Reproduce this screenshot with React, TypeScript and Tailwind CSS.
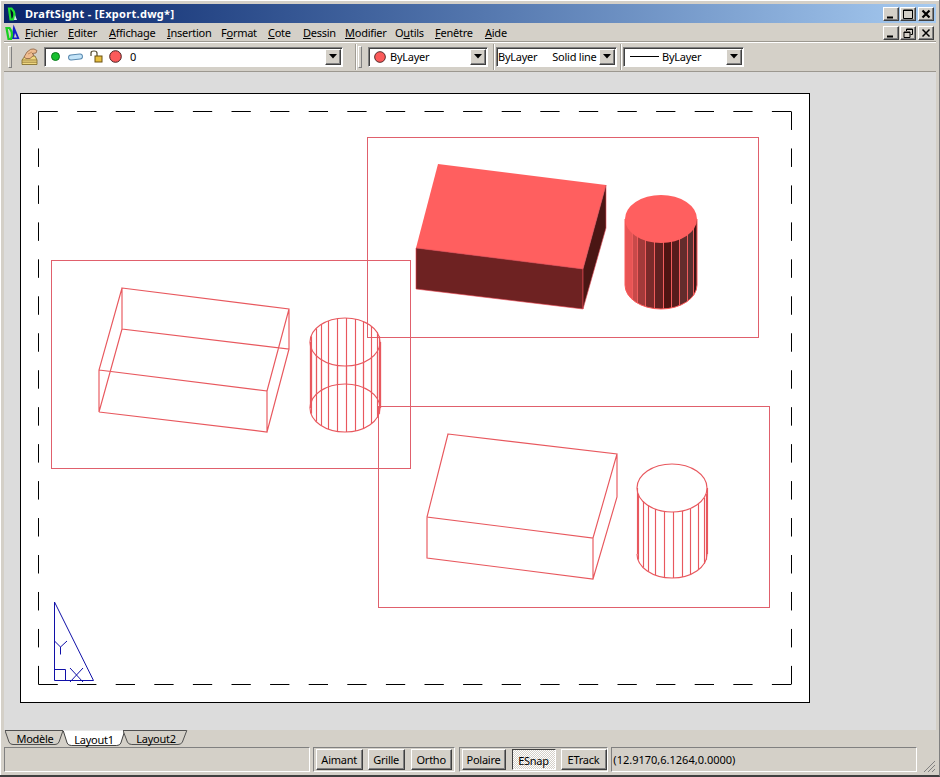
const stroke = "#e8585e";
const raised =
  "border border-t-white border-l-white border-r-[#404040] border-b-[#404040] shadow-[inset_-1px_-1px_0_#808080] bg-[#d4d0c8]";
const sunken =
  "border border-t-[#808080] border-l-[#808080] border-r-white border-b-white shadow-[inset_1px_1px_0_#404040]";
const etched = "border border-t-[#808080] border-l-[#808080] border-r-white border-b-white";

const menu = [
  { pre: "", key: "F", post: "ichier", cls: "w-[43px]" },
  { pre: "", key: "E", post: "diter", cls: "w-[41px]" },
  { pre: "", key: "A", post: "ffichage", cls: "w-[58px]" },
  { pre: "", key: "I", post: "nsertion", cls: "w-[54px]" },
  { pre: "F", key: "o", post: "rmat", cls: "w-[47px]" },
  { pre: "", key: "C", post: "ote", cls: "w-[35px]" },
  { pre: "", key: "D", post: "essin", cls: "w-[42px]" },
  { pre: "", key: "M", post: "odifier", cls: "w-[50px]" },
  { pre: "O", key: "u", post: "tils", cls: "w-[40px]" },
  { pre: "", key: "F", post: "enêtre", cls: "w-[50px]" },
  { pre: "", key: "A", post: "ide", cls: "w-[30px]" },
];

const facets = [-35, -34, -29, -24, -17, -8, 1, 10, 18, 26, 32, 34, 35];

function arc(dx: number, rx: number, ry: number) {
  return ry * Math.sqrt(Math.max(0, 1 - (dx * dx) / (rx * rx)));
}

function Logo({ big }: { big?: boolean }) {
  if (big) {
    return (
      <svg width="15" height="16" viewBox="0 0 15 16" className="shrink-0">
        <path d="M8.5 0.5 L14.5 15 L6.5 15 Z" fill="#1420c8" />
        <path d="M10 9 L12 13.5 L9 13.5 Z" fill="#d4d0c8" />
        <path d="M1.5 4 L4.5 4 Q8.5 9 6 15 L3.5 15 Z" fill="none" stroke="#18d020" strokeWidth="2.2" />
      </svg>
    );
  }
  return (
    <svg width="12" height="14" viewBox="0 0 12 14" className="shrink-0">
      <path d="M3 1.5 L5.5 1.5 Q10.5 6.5 7 12.5 L4.5 12.5 Z" fill="#04102a" stroke="#20e030" strokeWidth="2.2" />
      <path d="M9 8 L11 13 L8 13 Z" fill="#d8e8f0" />
    </svg>
  );
}

function WinButton({ kind, bold }: { kind: "min" | "max" | "restore" | "close"; bold?: boolean }) {
  return (
    <div className={`flex h-[14px] w-[16px] items-center justify-center ${raised}`}>
      <svg width="12" height="10" viewBox="0 0 12 10" fill="none" stroke="#000">
        {kind === "min" && <path d="M2 8.5 H8" strokeWidth="2" />}
        {kind === "max" && <path d="M1.5 1 H10.5 V9.5 H1.5 Z M1.5 1.5 H10.5" />}
        {kind === "restore" && (
          <path d="M4.5 3 V1 H10.5 V6.5 H8.5 M2 4 H8 V9.5 H2 Z M2 4.5 H8 M4.5 1.5 H10.5" />
        )}
        {kind === "close" && (
          <path d="M2.5 1.5 L9.5 8.5 M9.5 1.5 L2.5 8.5" strokeWidth={bold ? 2.2 : 1.5} />
        )}
      </svg>
    </div>
  );
}

function Grip() {
  return (
    <div className="h-[22px] w-[4px] shrink-0 border border-t-white border-l-white border-r-[#808080] border-b-[#808080]" />
  );
}

function Sep() {
  return <div className="h-[26px] w-[2px] shrink-0 border-l border-l-[#a09c94] border-r border-r-white" />;
}

function ComboArrow() {
  return (
    <div className={`flex h-[16px] w-[16px] shrink-0 items-center justify-center ${raised}`}>
      <svg width="8" height="5" viewBox="0 0 8 5">
        <path d="M0 0 H8 L4 4.5 Z" fill="#000" />
      </svg>
    </div>
  );
}

function Dot({ size = 13 }: { size?: number }) {
  return (
    <svg width={size} height={size} viewBox="0 0 13 13" className="shrink-0">
      <circle cx="6.5" cy="6.5" r="5.8" fill="#fb5a5a" stroke="#4a2020" strokeWidth="1" />
    </svg>
  );
}

function LayerIcon() {
  return (
    <svg width="17" height="19" viewBox="0 0 17 19" className="shrink-0">
      <path d="M1 13 L4 9 L14 9 L16 13 L16 17.5 L1 17.5 Z" fill="#f0d880" stroke="#7a6420" strokeWidth="0.8" />
      <path d="M1 13 H16 M1 15.2 H16" stroke="#8a7030" strokeWidth="0.8" />
      <path d="M3 10 L6 5 Q10 1 13 2 L16 3.5 L15 6 L11 6.5 L13 8 L9 11.5 L5 11.5 Z" fill="#eebc90" stroke="#8a6040" strokeWidth="0.8" />
      <path d="M7 7 L11 5" stroke="#b88050" strokeWidth="0.8" />
    </svg>
  );
}

function LockIcon() {
  return (
    <svg width="14" height="13" viewBox="0 0 14 13" className="shrink-0">
      <path d="M2 6 V3 Q2 1 5 1 Q8 1 8 3 V6" fill="none" stroke="#504830" strokeWidth="1.2" />
      <rect x="6" y="6" width="7" height="6" fill="#e8c040" stroke="#6a5010" />
    </svg>
  );
}

function Tab({ label, active, cls }: { label: string; active?: boolean; cls: string }) {
  return (
    <div className={`relative flex items-center justify-center ${cls}`}>
      <svg className="absolute inset-0 h-full w-full" viewBox="0 0 60 17" preserveAspectRatio="none">
        <path
          d={active ? "M0 0 L4 13 Q5 15.5 8 15.5 L52 15.5 Q55 15.5 56 13 L60 0 Z" : "M0 0.5 L4 12 Q5 14.5 8 14.5 L50 14.5 Q53 14.5 54 12 L58 0.5 Z"}
          fill={active ? "#ffffff" : "#d4d0c8"}
          stroke={active ? "#404040" : "#505050"}
          strokeWidth="1"
          vectorEffect="non-scaling-stroke"
        />
        {active && <path d="M0 0 H60" stroke="#ffffff" strokeWidth="1.5" vectorEffect="non-scaling-stroke" />}
      </svg>
      <span className={`relative ${active ? "pt-[1px]" : "-mt-[1px]"}`}>{label}</span>
    </div>
  );
}

function StatusButton({ label, cls, on }: { label: string; cls: string; on?: boolean }) {
  return (
    <div
      className={`flex h-[21px] items-center justify-center ${cls} ${
        on
          ? "border border-t-[#404040] border-l-[#404040] border-r-white border-b-white bg-[repeating-conic-gradient(#ffffff_0_25%,#d4d0c8_0_50%)] bg-[length:2px_2px] pt-[1px]"
          : raised
      }`}
    >
      {label}
    </div>
  );
}

function WireCylinder({ cx, top, bottom, back }: { cx: number; top: number; bottom: number; back?: boolean }) {
  const rx = 35;
  const ry = 24;
  return (
    <g fill="none" stroke={stroke} strokeWidth="1.15">
      <ellipse cx={cx} cy={top} rx={rx} ry={ry} />
      {back && <ellipse cx={cx} cy={bottom} rx={rx} ry={ry} />}
      {!back && <path d={`M${cx - rx} ${bottom} A${rx} ${ry} 0 0 0 ${cx + rx} ${bottom}`} />}
      {facets.map((dx) => {
        const d = arc(dx, rx, ry);
        return <line key={dx} x1={cx + dx + 0.5} x2={cx + dx + 0.5} y1={top + d} y2={bottom + d} />;
      })}
      {back &&
        facets.map((dx) => {
          const d = arc(dx, rx, ry);
          return <line key={`b${dx}`} x1={cx + dx + 0.5} x2={cx + dx + 0.5} y1={top - d} y2={bottom - d} />;
        })}
    </g>
  );
}

function SolidCylinder() {
  const cx = 661;
  const bands = [
    { x: 625, w: 7, c: "#e85555" },
    { x: 632, w: 5, c: "#c84a4a" },
    { x: 637, w: 8, c: "#a23a3a" },
    { x: 645, w: 9, c: "#7a2a2a" },
    { x: 654, w: 9, c: "#602020" },
    { x: 663, w: 8, c: "#4e1412" },
    { x: 671, w: 8, c: "#571c1c" },
    { x: 679, w: 8, c: "#632c2c" },
    { x: 687, w: 6, c: "#5a3030" },
    { x: 693, w: 4, c: "#3a1515" },
  ];
  const lines = [632, 637, 645, 654, 663, 671, 679, 687, 693];
  return (
    <g>
      <clipPath id="solidBody">
        <path d="M625 219 H697 V285 A36 24 0 0 1 625 285 Z" />
      </clipPath>
      <g clipPath="url(#solidBody)">
        {bands.map((b) => (
          <rect key={b.x} x={b.x} y={215} width={b.w} height={96} fill={b.c} />
        ))}
        {lines.map((x) => (
          <line key={x} x1={x + 0.5} x2={x + 0.5} y1={215} y2={311} stroke="#f05c5c" />
        ))}
      </g>
      <path d="M625 219 V285 A36 24 0 0 0 697 285 V219" fill="none" stroke="#fb5a5a" />
      <ellipse cx={cx} cy={219} rx={36} ry={24} fill="#ff5f5f" />
    </g>
  );
}

function Drawing() {
  return (
    <svg width="788" height="608" viewBox="21 94 788 608" className="block">
      {/* sheet margin */}
      <g stroke="#000" fill="none">
        <path d="M38.5 111.5 H791.5" strokeDasharray="19.3 19.3" />
        <path d="M38.5 684.5 H791.5" strokeDasharray="19.3 19.3" />
        <path d="M38.5 111.5 V684.5" strokeDasharray="18.48 18.48" />
        <path d="M791.5 111.5 V684.5" strokeDasharray="18.48 18.48" />
      </g>

      {/* viewports */}
      <g fill="none" stroke="#e0606c" shapeRendering="crispEdges">
        <rect x="367.5" y="137.5" width="391" height="200" />
        <rect x="51.5" y="260.5" width="359" height="208" />
        <rect x="378.5" y="406.5" width="391" height="201" />
      </g>

      {/* shaded box */}
      <path d="M438 164 L606 185 L583 269 L416 248 Z" fill="#ff5f5f" />
      <path d="M416 248 L583 269 L583 309 L416 289 Z" fill="#6e2222" stroke="#e8404c" strokeWidth="0.6" />
      <path d="M606 185 L583 269 L583 309 L606 228 Z" fill="#4a1614" stroke="#e8505c" strokeWidth="0.6" />
      <SolidCylinder />

      {/* wireframe views */}
      <path
        d="M122 288 L289 309 L289 349 L122 329 Z M122 288 L99 370 L99 412 L122 329 M99 370 L267 391 L267 432 L99 412 M289 309 L267 391 M289 349 L267 432"
        fill="none"
        stroke={stroke}
        strokeWidth="1.15"
      />
      <WireCylinder cx={345} top={342} bottom={408} back />
      <path
        d="M448 434 L617 454 L593 538 L427 517 Z M617 454 L617 497 L593 579 L427 558 L427 517 M593 538 L593 579"
        fill="none"
        stroke={stroke}
        strokeWidth="1.15"
      />
      <WireCylinder cx={672} top={488} bottom={554} />

      {/* ucs icon */}
      <g fill="none" stroke="#1010a8">
        <path d="M54.5 602 V680.5 H93.5 Z" />
        <path d="M54.5 669.5 H65.5 V680.5" />
        <path d="M54.5 641 L60.5 647 L67 641 M60.5 647 V654.5" />
        <path d="M70 668 L83 682 M83 668 L70 682" />
      </g>
    </svg>
  );
}

export default function App() {
  return (
    <div className="h-[777px] w-[940px] overflow-hidden bg-[#d4d0c8] font-['Noto_Sans',sans-serif] text-[11px] leading-none tracking-[-0.25px] text-black">
      <div className="flex h-full flex-col border-b-2 border-r border-b-[#404040] border-r-[#808080] pl-[4px] pr-[3px] pt-[4px] shadow-[inset_1px_1px_0_#ffffff]">
        {/* Title bar */}
        <div className="flex h-[19px] shrink-0 items-center bg-gradient-to-r from-[#0a246a] to-[#a6caf0] pl-[2px] pr-[2px]">
          <Logo />
          <span className="ml-[7px] font-bold tracking-[0.3px] text-white">DraftSight - [Export.dwg*]</span>
          <div className="ml-auto flex gap-[1px]">
            <WinButton kind="min" />
            <WinButton kind="max" />
            <div className="ml-[1px]">
              <WinButton kind="close" bold />
            </div>
          </div>
        </div>

        {/* Menu bar */}
        <div className="flex h-[18px] shrink-0 items-center pl-[1px] pr-[2px]">
          <Logo big />
          <div className="ml-[5px] flex">
            {menu.map((m, i) => (
              <span key={i} className={m.cls}>
                {m.pre}
                <span className="underline">{m.key}</span>
                {m.post}
              </span>
            ))}
          </div>
          <div className="ml-auto mt-[2px] flex gap-[1px]">
            <WinButton kind="min" />
            <WinButton kind="restore" />
            <div className="ml-[1px]">
              <WinButton kind="close" />
            </div>
          </div>
        </div>

        {/* Toolbar */}
        <div className="flex h-[31px] shrink-0 items-center whitespace-nowrap border-y border-t-[#9c9890] border-b-[#9c9890] pl-[4px] shadow-[inset_0_1px_0_#ffffff]">
          <Grip />
          <div className="ml-[9px]">
            <LayerIcon />
          </div>
          <div className={`ml-[6px] flex h-[20px] w-[299px] items-center bg-white pl-[6px] pr-[1px] ${sunken}`}>
            <span className="h-[9px] w-[9px] rounded-full border border-[#0a7a1a] bg-[#18c030]" />
            <span className="ml-[8px] h-[6px] w-[15px] -rotate-6 rounded-full border border-[#5a8ab0] bg-[#c4e4f8]" />
            <span className="ml-[6px]">
              <LockIcon />
            </span>
            <span className="ml-[6px]">
              <Dot />
            </span>
            <span className="ml-[8px]">0</span>
            <span className="ml-auto">
              <ComboArrow />
            </span>
          </div>
          <div className="ml-[12px]">
            <Sep />
          </div>
          <div className="ml-[1px]">
            <Grip />
          </div>
          <div className={`ml-[6px] flex h-[20px] w-[120px] items-center bg-white pl-[5px] pr-[1px] ${sunken}`}>
            <Dot size={12} />
            <span className="ml-[4px]">ByLayer</span>
            <span className="ml-auto">
              <ComboArrow />
            </span>
          </div>
          <div className="ml-[5px]">
            <Sep />
          </div>
          <div className={`ml-[1px] flex h-[20px] w-[121px] items-center bg-white pl-[1px] pr-[1px] ${sunken}`}>
            <span>ByLayer</span>
            <span className="ml-[15px]">Solid line</span>
            <span className="ml-auto">
              <ComboArrow />
            </span>
          </div>
          <div className="ml-[3px]">
            <Sep />
          </div>
          <div className={`ml-[1px] flex h-[20px] w-[121px] items-center bg-white pl-[6px] pr-[1px] ${sunken}`}>
            <span className="h-[1px] w-[29px] bg-black" />
            <span className="ml-[3px]">ByLayer</span>
            <span className="ml-auto">
              <ComboArrow />
            </span>
          </div>
        </div>

        {/* Drawing area */}
        <div className="flex-1 bg-[#dcdcdc] pl-[16px] pt-[21px]">
          <div className="w-[790px] border border-black bg-white">
            <Drawing />
          </div>
        </div>

        {/* Layout tabs */}
        <div className="flex h-[17px] shrink-0 pl-[1px]">
          <Tab label="Modèle" cls="w-[60px]" />
          <Tab label="Layout1" active cls="-ml-[2px] w-[62px]" />
          <Tab label="Layout2" cls="-ml-[2px] w-[66px]" />
        </div>

        {/* Status bar */}
        <div className="flex h-[28px] shrink-0 items-start">
          <div className={`h-[25px] w-[306px] ${etched}`} />
          <div className={`ml-[3px] flex h-[25px] w-[142px] items-center pl-[2px] ${etched}`}>
            <StatusButton label="Aimant" cls="w-[47px]" />
            <StatusButton label="Grille" cls="ml-[5px] w-[37px]" />
            <StatusButton label="Ortho" cls="ml-[6px] w-[41px]" />
          </div>
          <div className={`ml-[4px] flex h-[25px] w-[150px] items-center pl-[2px] ${etched}`}>
            <StatusButton label="Polaire" cls="w-[44px]" />
            <StatusButton label="ESnap" on cls="ml-[6px] w-[44px]" />
            <StatusButton label="ETrack" cls="ml-[5px] w-[46px]" />
          </div>
          <div className={`ml-[3px] flex h-[25px] w-[306px] items-center pl-[1px] tracking-normal ${etched}`}>
            (12.9170,6.1264,0.0000)
          </div>
          <svg width="14" height="14" viewBox="0 0 14 14" className="ml-[5px] mt-[12px] shrink-0" stroke="#808080">
            <path d="M13 2 L2 13 M13 6 L6 13 M13 10 L10 13" />
          </svg>
        </div>
      </div>
    </div>
  );
}
